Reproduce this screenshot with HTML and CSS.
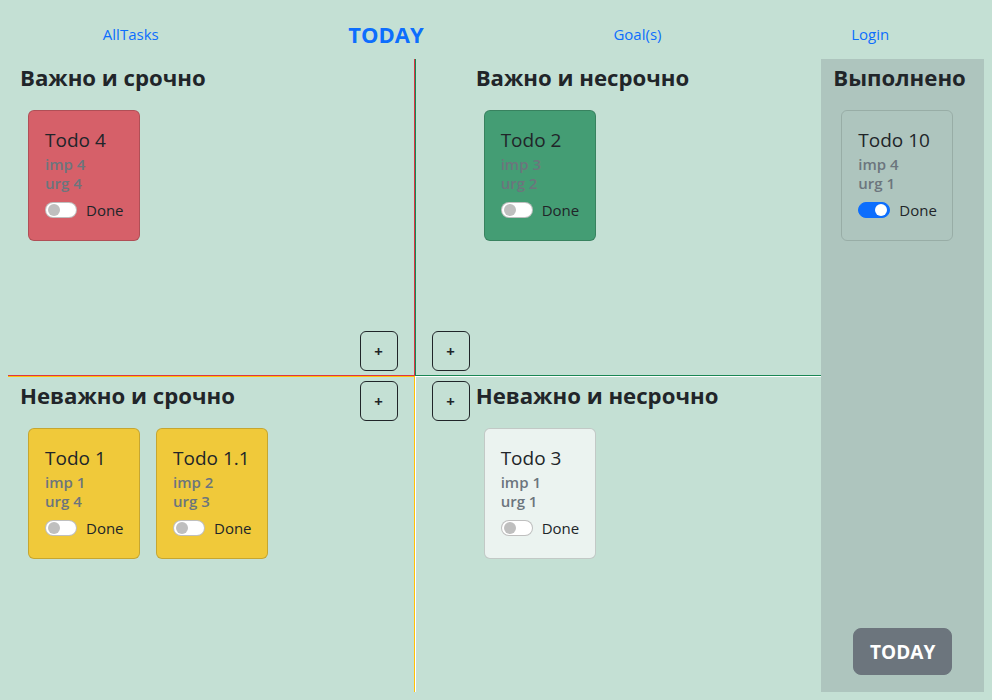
FILE: index.html
```html
<!DOCTYPE html>
<html lang="ru">
<head>
<meta charset="utf-8">
<title>TODAY</title>
<link rel="stylesheet" href="styles.css">
</head>
<body>
<nav class="topnav">
  <a class="nav-link" href="#">AllTasks</a>
  <a class="nav-link active" href="#">TODAY</a>
  <a class="nav-link" href="#">Goal(s)</a>
  <a class="nav-link" href="#">Login</a>
</nav>
<main class="board">
  <section class="matrix">
    <div class="quad quad-left quad-top q-red">
      <div class="quad-body">
        <h2 class="quad-title">Важно и срочно</h2>
        <div class="tasks">
          <div class="card card-red">
            <div class="card-title">Todo 4</div>
            <div class="meta">imp 4</div>
            <div class="meta">urg 4</div>
            <label class="switch-row"><span class="switch"></span><span>Done</span></label>
          </div>
        </div>
      </div>
      <div class="btn-col"><button class="add-btn">+</button></div>
    </div>
    <div class="quad quad-right quad-top q-green">
      <div class="btn-col"><button class="add-btn">+</button></div>
      <div class="quad-body">
        <h2 class="quad-title">Важно и несрочно</h2>
        <div class="tasks">
          <div class="card card-green">
            <div class="card-title">Todo 2</div>
            <div class="meta">imp 3</div>
            <div class="meta">urg 2</div>
            <label class="switch-row"><span class="switch"></span><span>Done</span></label>
          </div>
        </div>
      </div>
    </div>
    <div class="quad quad-left quad-bottom q-yellow">
      <div class="quad-body">
        <h2 class="quad-title">Неважно и срочно</h2>
        <div class="tasks">
          <div class="card card-yellow">
            <div class="card-title">Todo 1</div>
            <div class="meta">imp 1</div>
            <div class="meta">urg 4</div>
            <label class="switch-row"><span class="switch"></span><span>Done</span></label>
          </div>
          <div class="card card-yellow">
            <div class="card-title">Todo 1.1</div>
            <div class="meta">imp 2</div>
            <div class="meta">urg 3</div>
            <label class="switch-row"><span class="switch"></span><span>Done</span></label>
          </div>
        </div>
      </div>
      <div class="btn-col"><button class="add-btn">+</button></div>
    </div>
    <div class="quad quad-right quad-bottom q-white">
      <div class="btn-col"><button class="add-btn">+</button></div>
      <div class="quad-body">
        <h2 class="quad-title">Неважно и несрочно</h2>
        <div class="tasks">
          <div class="card card-light">
            <div class="card-title">Todo 3</div>
            <div class="meta">imp 1</div>
            <div class="meta">urg 1</div>
            <label class="switch-row"><span class="switch"></span><span>Done</span></label>
          </div>
        </div>
      </div>
    </div>
  </section>
  <aside class="done">
    <h2 class="quad-title">Выполнено</h2>
    <div class="tasks">
      <div class="card card-done">
        <div class="card-title">Todo 10</div>
        <div class="meta">imp 4</div>
        <div class="meta">urg 1</div>
        <label class="switch-row"><span class="switch on"></span><span>Done</span></label>
      </div>
    </div>
    <div class="done-footer"><button class="today-btn">TODAY</button></div>
  </aside>
</main>
</body>
</html>
```
FILE: styles.css
```css
* { box-sizing: border-box; }
html, body { height: 100%; }
body {
  margin: 0 8px;
  background: #c4e0d4;
  color: #212529;
  font-family: "Open Sans", "Noto Sans", sans-serif;
  font-size: 16px;
}
.topnav {
  height: 59px;
  display: flex;
  justify-content: space-around;
  align-items: center;
  padding-top: 9px;
}
.nav-link {
  color: #0d6efd;
  text-decoration: none;
  font-size: 15px;
}
.nav-link.active {
  font-weight: 700;
  font-size: 22px;
}
.board {
  display: grid;
  grid-template-columns: 10fr 2fr;
  height: 633px;
}
.matrix {
  display: grid;
  grid-template-columns: 1fr 1fr;
  grid-template-rows: 317px 316px;
}
.quad { display: flex; min-width: 0; }
.quad-body { flex: 1; padding-top: 6px; min-width: 0; }
.quad-left .quad-body { padding-left: 12px; }
.quad-right .quad-body { padding-left: 6px; }
.q-red { border-right: 1px solid #dc3545; border-bottom: 1px solid #dc3545; }
.q-green { border-left: 1px solid #198754; border-bottom: 1px solid #198754; }
.q-yellow { border-right: 1px solid #ffc107; border-top: 1px solid #ffc107; }
.q-white { border-left: 1px solid #ffffff; border-top: 1px solid #ffffff; }
.quad-title {
  margin: 0 0 19px;
  font-size: 22.2px;
  line-height: 26px;
  font-weight: 700;
}
.tasks {
  display: flex;
  flex-wrap: wrap;
  gap: 16px;
  padding-left: 8px;
}
.btn-col {
  display: flex;
  flex-direction: column;
  padding: 4px 0;
}
.quad-top .btn-col { justify-content: flex-end; }
.quad-bottom .btn-col { justify-content: flex-start; }
.quad-left .btn-col { padding-right: 16px; }
.quad-right .btn-col { padding-left: 16px; }
.add-btn {
  width: 38px;
  height: 40px;
  border: 1px solid #212529;
  border-radius: 6px;
  background: transparent;
  color: #212529;
  font-family: inherit;
  font-size: 15px;
  font-weight: 700;
  padding: 0;
}
.card {
  width: 112px;
  height: 131px;
  border: 1px solid rgba(0, 0, 0, 0.175);
  border-radius: 6px;
  padding: 16px;
}
.card-red { background: rgba(220, 53, 69, 0.75); }
.card-green { background: rgba(25, 135, 84, 0.75); }
.card-yellow { background: rgba(255, 193, 7, 0.75); }
.card-light { background: rgba(248, 249, 250, 0.75); }
.card-done { background: transparent; border-color: rgba(0, 0, 0, 0.12); }
.card-title {
  font-size: 19px;
  line-height: 24px;
  margin: 1px 0 3px;
  white-space: nowrap;
}
.meta {
  color: #6c757d;
  font-size: 15px;
  line-height: 19px;
  font-weight: 600;
}
.switch-row {
  display: flex;
  align-items: center;
  gap: 9px;
  margin-top: 5px;
  height: 24px;
  font-size: 15px;
  white-space: nowrap;
}
.switch {
  position: relative;
  width: 32px;
  height: 16px;
  border-radius: 8px;
  background: #fff;
  border: 1px solid rgba(0, 0, 0, 0.25);
  flex: none;
}
.switch::after {
  content: "";
  position: absolute;
  top: 1px;
  left: 2px;
  width: 12px;
  height: 12px;
  border-radius: 50%;
  background: #bfbfbf;
}
.switch.on { background: #0d6efd; border-color: #0d6efd; }
.switch.on::after { left: auto; right: 2px; background: #fff; }
.done {
  background: rgba(108, 117, 125, 0.25);
  padding-top: 6px;
  padding-left: 12px;
  display: flex;
  flex-direction: column;
}
.done-footer {
  margin-top: auto;
  display: flex;
  justify-content: center;
  padding: 0 12px 17px 0;
}
.today-btn {
  background: #6c757d;
  color: #fff;
  border: 1px solid #6c757d;
  border-radius: 8px;
  font-family: inherit;
  font-size: 19px;
  font-weight: 700;
  width: 99px;
  height: 47px;
  padding: 0;
}
```
